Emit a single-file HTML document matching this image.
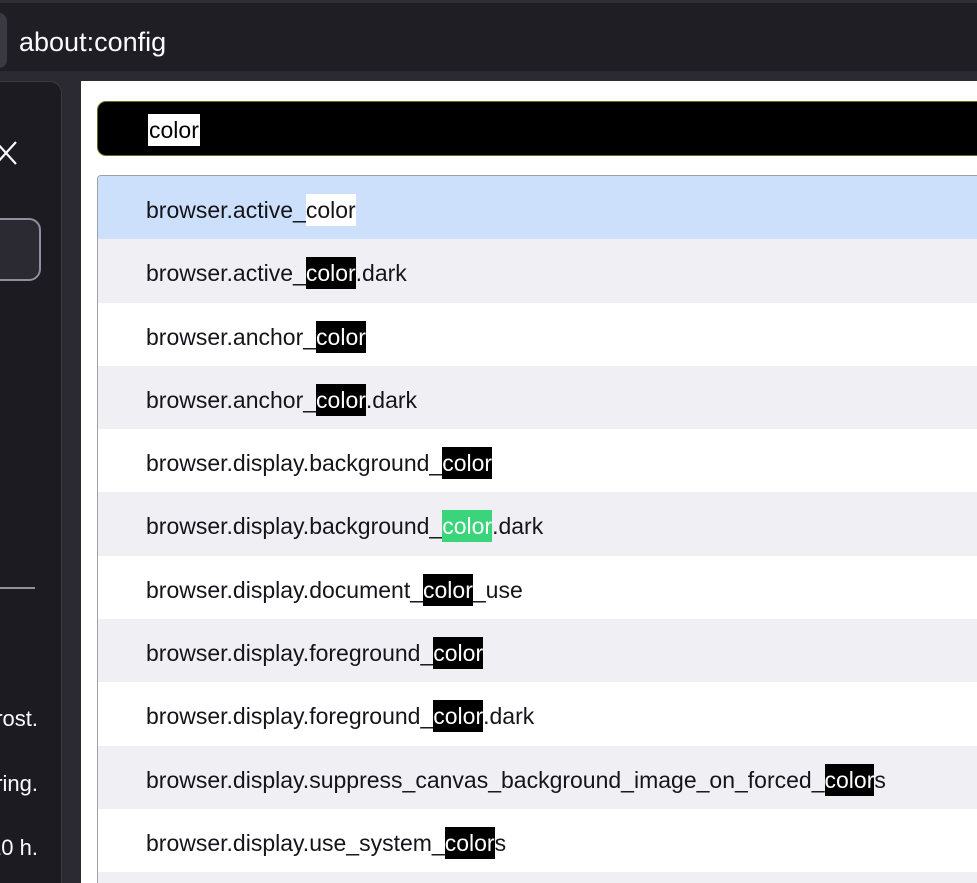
<!DOCTYPE html>
<html><head><style>
*{margin:0;padding:0;box-sizing:border-box}
html,body{width:977px;height:883px;overflow:hidden}
body{background:#2b2a33;font-family:"Liberation Sans",sans-serif;position:relative}
.top{position:absolute;left:0;top:0;width:977px;height:71px;background:#1f1e25;border-top:3px solid #2e2d35}
.url{position:absolute;left:-10px;top:10px;width:17px;height:55px;background:#3a3941;border-radius:8px}
.urltext{position:absolute;left:19px;top:24px;color:#fbfbfe;font-size:27px}
.side{position:absolute;left:-20px;top:81px;width:82px;height:802px;background:#1c1b22;border:1px solid #3a3941;border-bottom:none;border-radius:12px 12px 0 0}
.x{position:absolute;left:-6px;top:140px}
.btn{position:absolute;left:-20px;top:218px;width:61px;height:63px;border:2px solid #8f8f9d;border-radius:12px;background:#2b2a33}
.hr{position:absolute;left:0;top:587px;width:35px;height:2px;background:#8f8f9d}
.st{position:absolute;right:939px;color:#fbfbfe;font-size:22px;white-space:nowrap}
.main{position:absolute;left:81px;top:81px;width:896px;height:802px;background:#fff}
.search{position:absolute;left:97px;top:101px;width:880px;height:55px;background:#000;border:1px solid #6b6b1f;border-right:none;border-radius:9px 0 0 9px}
.search span{position:absolute;left:50px;top:12px;background:#fff;color:#000;font-size:23px;line-height:32px;padding:0 1px}
.table{position:absolute;left:97px;top:175px;width:880px;height:708px;border:1px solid #a0a0a8;border-right:none;border-bottom:none;border-radius:4px 0 0 0;overflow:hidden}
.row{height:63.3px;padding-left:48px;padding-top:3px;font-size:23px;color:#15141a;line-height:63px;white-space:nowrap}
.row:nth-child(even){background:#f0f0f4}
.row.sel{background:#cde0fb}
.h{background:#000;color:#fff;display:inline-block;line-height:32px}
.w{background:#fff;color:#15141a;display:inline-block;line-height:32px}
.g{background:#3ad47a;color:#fff;display:inline-block;line-height:32px}
</style></head><body>
<div class="top"><div class="url"></div><div class="urltext">about:config</div></div>
<div class="side"></div>
<svg class="x" width="24" height="26" viewBox="0 0 24 26"><path d="M2 2L22 24M22 2L2 24" stroke="#fbfbfe" stroke-width="2.2"/></svg>
<div class="btn"></div>
<div class="hr"></div>
<div class="st" style="top:706px">rost.</div>
<div class="st" style="top:771px">ring.</div>
<div class="st" style="top:835px">10 h.</div>
<div class="main"></div>
<div class="search"><span>color</span></div>
<div class="table">
<div class="row sel">browser.active_<span class="w">color</span></div>
<div class="row">browser.active_<span class="h">color</span>.dark</div>
<div class="row">browser.anchor_<span class="h">color</span></div>
<div class="row">browser.anchor_<span class="h">color</span>.dark</div>
<div class="row">browser.display.background_<span class="h">color</span></div>
<div class="row">browser.display.background_<span class="g">color</span>.dark</div>
<div class="row">browser.display.document_<span class="h">color</span>_use</div>
<div class="row">browser.display.foreground_<span class="h">color</span></div>
<div class="row">browser.display.foreground_<span class="h">color</span>.dark</div>
<div class="row">browser.display.suppress_canvas_background_image_on_forced_<span class="h">color</span>s</div>
<div class="row">browser.display.use_system_<span class="h">color</span>s</div>
<div class="row"></div>
</div>
</body></html>
